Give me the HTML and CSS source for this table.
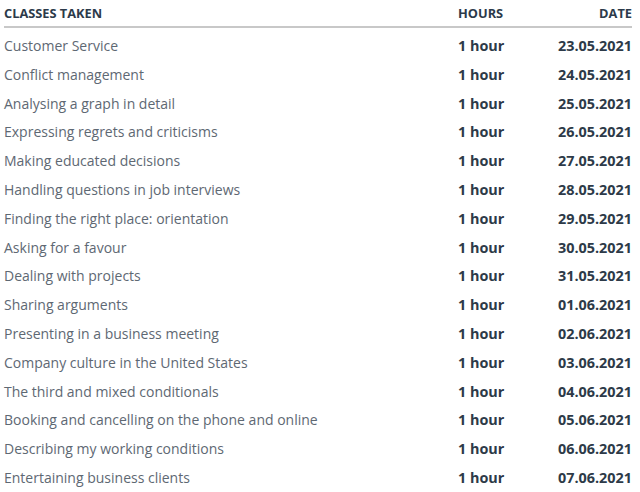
FILE: index.html
```html
<!DOCTYPE html>
<html>
<head>
<meta charset="utf-8">
<link rel="stylesheet" href="styles.css">
</head>
<body>
<table class="classes">
  <thead>
    <tr><th class="c-name">CLASSES TAKEN</th><th class="c-hours">HOURS</th><th class="c-date">DATE</th></tr>
  </thead>
  <tbody>
    <tr><td class="c-name">Customer Service</td><td class="c-hours">1 hour</td><td class="c-date">23.05.2021</td></tr>
    <tr><td class="c-name">Conflict management</td><td class="c-hours">1 hour</td><td class="c-date">24.05.2021</td></tr>
    <tr><td class="c-name">Analysing a graph in detail</td><td class="c-hours">1 hour</td><td class="c-date">25.05.2021</td></tr>
    <tr><td class="c-name">Expressing regrets and criticisms</td><td class="c-hours">1 hour</td><td class="c-date">26.05.2021</td></tr>
    <tr><td class="c-name">Making educated decisions</td><td class="c-hours">1 hour</td><td class="c-date">27.05.2021</td></tr>
    <tr><td class="c-name">Handling questions in job interviews</td><td class="c-hours">1 hour</td><td class="c-date">28.05.2021</td></tr>
    <tr><td class="c-name">Finding the right place: orientation</td><td class="c-hours">1 hour</td><td class="c-date">29.05.2021</td></tr>
    <tr><td class="c-name">Asking for a favour</td><td class="c-hours">1 hour</td><td class="c-date">30.05.2021</td></tr>
    <tr><td class="c-name">Dealing with projects</td><td class="c-hours">1 hour</td><td class="c-date">31.05.2021</td></tr>
    <tr><td class="c-name">Sharing arguments</td><td class="c-hours">1 hour</td><td class="c-date">01.06.2021</td></tr>
    <tr><td class="c-name">Presenting in a business meeting</td><td class="c-hours">1 hour</td><td class="c-date">02.06.2021</td></tr>
    <tr><td class="c-name">Company culture in the United States</td><td class="c-hours">1 hour</td><td class="c-date">03.06.2021</td></tr>
    <tr><td class="c-name">The third and mixed conditionals</td><td class="c-hours">1 hour</td><td class="c-date">04.06.2021</td></tr>
    <tr><td class="c-name">Booking and cancelling on the phone and online</td><td class="c-hours">1 hour</td><td class="c-date">05.06.2021</td></tr>
    <tr><td class="c-name">Describing my working conditions</td><td class="c-hours">1 hour</td><td class="c-date">06.06.2021</td></tr>
    <tr><td class="c-name">Entertaining business clients</td><td class="c-hours">1 hour</td><td class="c-date">07.06.2021</td></tr>
  </tbody>
</table>
</body>
</html>
```
FILE: styles.css
```css
html, body {
  margin: 0;
  padding: 0;
  background: #ffffff;
}
body {
  font-family: "Open Sans", "Liberation Sans", sans-serif;
}
.classes {
  margin-left: 4px;
  width: 628px;
  border-collapse: collapse;
  table-layout: fixed;
}
.classes th {
  font-size: 12.8px;
  font-weight: 700;
  color: #2c3a4a;
  line-height: 16px;
  padding: 5px 0 5px;
  border-bottom: 2px solid #c8c8c8;
  text-align: left;
}
.classes td {
  font-size: 14px;
  line-height: 20.8px;
  padding: 8px 0 0;
  white-space: nowrap;
  vertical-align: baseline;
}
.classes td.c-name {
  color: #5e6873;
  font-weight: 400;
}
.classes .c-name { width: 454px; }
.classes .c-hours { width: 70px; }
.classes td.c-hours,
.classes td.c-date {
  font-size: 14.4px;
  font-weight: 700;
  color: #2d3a48;
}
.classes .c-date { text-align: right; }
```
